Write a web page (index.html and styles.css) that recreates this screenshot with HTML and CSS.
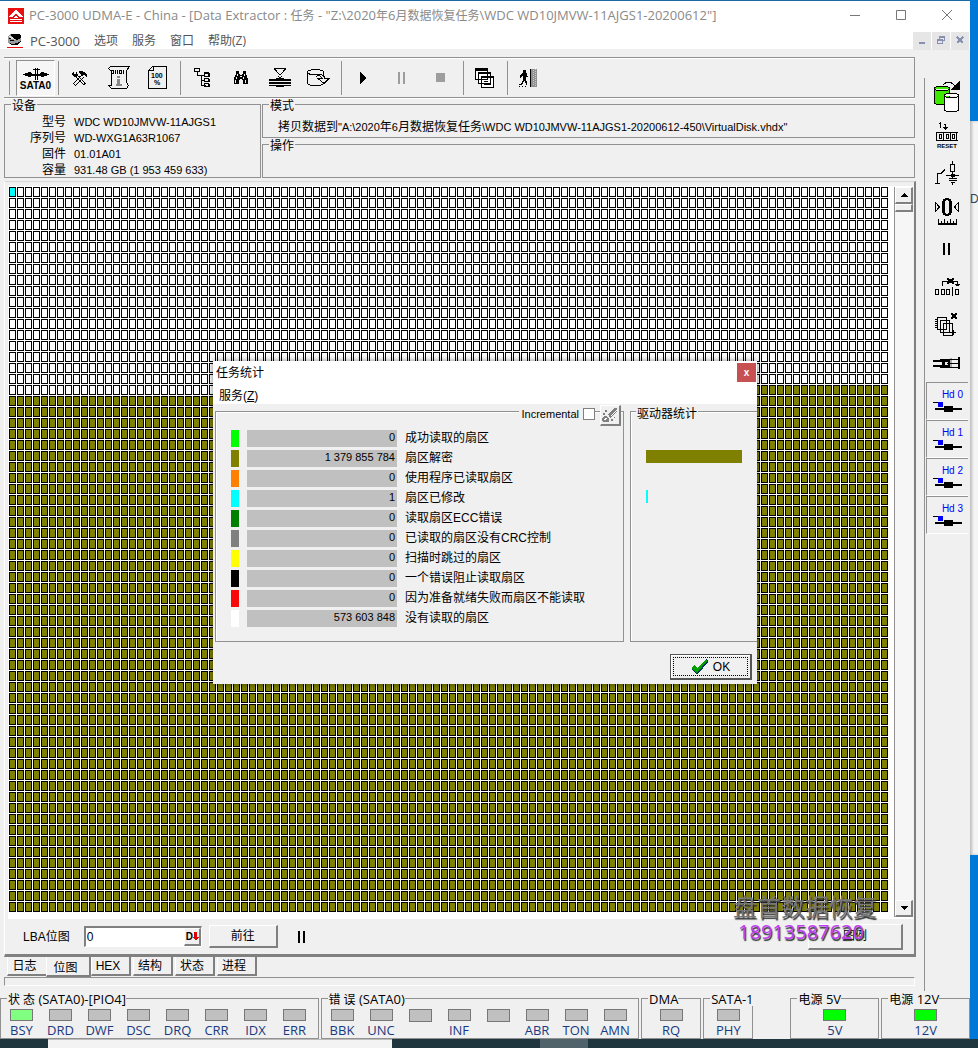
FILE: index.html
```
<!DOCTYPE html>
<html lang="zh-CN">
<head>
    <meta charset="UTF-8">
    <meta name="viewport" content="width=device-width, initial-scale=1.0">
    <title>PC-3000 UDMA-E</title>
    <link rel="stylesheet" href="styles.css">
</head>
<body>
    <div class="desktop">
        <div class="app">
            <header class="titlebar">
                <svg class="logo" viewBox="0 0 16 16"><path fill="#e81010" d="M0 0h16v16H0z"/><path fill="#fff" d="M7 2h2v1h1v1h1v1h1v1h1v1h1v1h1v1h-4V8h-1V7H9V6H7v1H6v1H5v1H1V8h1V7h1V6h1V5h1V4h1V3h1zM7 8h2v1h1v1H6V9h1zM2 11h12v1H2zM2 13h12v1H2z"/></svg>
                <h1>PC-3000 UDMA-E - China - [Data Extractor : <b>任务</b> - "Z:\2020<b>年</b>6<b>月数据恢复任务</b>\WDC WD10JMVW-11AJGS1-20200612"]</h1>
                <div class="window-buttons">
                    <button aria-label="Minimize"><svg viewBox="0 0 11 11"><path d="M0 5.500h10"/></svg></button>
                    <button aria-label="Maximize"><svg viewBox="0 0 11 11"><path d="M.5.500h9v9h-9z"/></svg></button>
                    <button aria-label="Close"><svg viewBox="0 0 11 11"><path d="M0 0l10 10M10 0L0 10"/></svg></button>
                </div>
            </header>
            <nav class="menubar">
                <svg class="menu-logo" viewBox="0 0 16 16"><path fill="#999" d="M1 3l3-2h8l2 5v3l-8 3-5-2z"/><path fill="#000" d="M4 1h8l2 1v3l-2 1-2 1-3-1-3-3zM2 10l3 1 5-1 4-2v1l-4 3H5z"/><path fill="#000" d="M2 5h3v1H2zM3 7h4v1H3z"/><path fill="#e4e4e4" d="M2 3l4 1 2 3-3-1-3-2z"/><path fill="#e81010" d="M0 14h16v1H0z"/></svg>
                <a href="#">PC-3000</a>
                <a href="#"><b>选项</b></a>
                <a href="#"><b>服务</b></a>
                <a href="#"><b>窗口</b></a>
                <a href="#"><b>帮助(Z)</b></a>
                <div class="mdi-buttons">
                    <button aria-label="Minimize child"><svg viewBox="0 0 9 9"><path d="M1 7h6"/></svg></button>
                    <button aria-label="Restore child"><svg viewBox="0 0 9 9"><path class="thin" d="M.5 3.500h5v4h-5zM.5 4.500h5M2.500 3V.5h5v4h-2M2.500 1.500h5"/></svg></button>
                    <button aria-label="Close child"><svg viewBox="0 0 9 9"><path d="M1 1l6 6M7 1L1 7"/></svg></button>
                </div>
            </nav>

            <div class="main">
                <div class="workspace">
                    <div class="toolbar">
                        <i class="sep"></i>
                        <button class="port" aria-label="SATA0">
                            <svg width="26" height="12" viewBox="0 0 26 12"><path d="M0 6h26v1H0zM2 5h7v3H2zM5 4h3v5H5zM17 5h7v3h-7zM18 4h3v5h-3zM9 6h8v2H9z"/><path d="M12 0h1v12h-1zM14 0h1v12h-1zM10 1h7v1h-7z"/></svg>
                            <span>SATA0</span>
                        </button>
                        <i class="sep"></i>
                        <button aria-label="Tools"><svg width="16" height="16" viewBox="0 0 16 16"><path d="M7 1h4v1h2v1h1v1h1v3h-1V6h-1V5h-2v1H9V4H8V3H7zM1 2h1v2h2V2h1v2h1v2H5v1H2V6H1V5H0V3h1z"/><path class="line" d="M9.500 5.500l-8 8M11.500 7.500l-8 8M1 13.500l3 2M6.500 6l7 8M4.500 7.500l7 7M11 14.500l3-1"/></svg></button>
                        <button aria-label="Script"><svg width="22" height="24" viewBox="0 0 22 24"><path class="line" d="M2.500 4.500l-2-2 2-2h19l-3 4v12l2 3-2 3h-15l-3-3h3v-14z"/><path class="line" d="M3.500 4.500h2v3h-2zM7.500 4v4M9.500 4v4M11.500 4.500h2v3h-2zM15.500 4v4"/><path fill="#888" d="M9 13h3v5h2v2H8v-2h1zM9 10h3v2H9z"/></svg></button>
                        <button aria-label="Percent"><svg width="19" height="23" viewBox="0 0 19 23"><path class="line" d="M.5 4.500l4-4h14v22H.5zM1 4h4V0"/><text class="tiny" x="3" y="12">100</text><text class="tiny" x="6" y="19">%</text></svg></button>
                        <i class="sep"></i>
                        <button aria-label="Tree"><svg width="16" height="20" viewBox="0 0 16 20"><path class="line" d="M.5.500h5v3h-5zM3.500 4v3h7M7.500 7v10h4M8 12.500h3M10.500 4.500h4v4h-4zM10.500 10.500h4v3h-4zM10.500 15.500h4v3h-4zM10 5.500h5M15.500 5v4M15.500 11v3M15.500 16v3"/></svg></button>
                        <button aria-label="Find"><svg width="16" height="14" viewBox="0 0 16 14"><path d="M3 0h3v3h1v1h2V3h1V0h3v3l1 2 1 3v5h-5V9H9V8H7v1H6v4H1V8l1-3 1-2z"/><path fill="#f0f0f0" d="M4 3h1v2H4zM3 6h1v2H3zM2 9h1v3H2zM11 3h1v2h-1zM10 6h1v2h-1zM12 9h1v3h-1zM7 5h2v1H7z"/></svg></button>
                        <button aria-label="Head map"><svg width="22" height="20" viewBox="0 0 22 20"><path class="line" d="M5 .5h12M5.500 1l5.500 6 5.500-6M9 8l2 2 2-2"/><path d="M0 11h22v2H0zM0 14h22v2H0zM0 17h22v1H0zM7 10h8v9H7z"/><path fill="#f0f0f0" d="M0 13h22v1H0zM0 16h22v1H0z"/></svg></button>
                        <button aria-label="Copy disk"><svg width="23" height="18" viewBox="0 0 23 18"><path class="line" d="M.5 3c0-3 16-3 16 0M.5 3c0 3 8 3 11 2M.5 3v11c0 3 12 4 15 1M16.500 3v4M9 7.500c2-2 5-1 6 2h-4l6 5 5-5h-4c-1-3-3-4-6-4"/></svg></button>
                        <i class="sep"></i>
                        <button aria-label="Start"><svg width="7" height="12" viewBox="0 0 7 12"><path d="M1 0l6 6-6 6z"/></svg></button>
                        <button aria-label="Pause" disabled><svg width="8" height="12" viewBox="0 0 8 12"><path fill="#9d9d9d" d="M0 0h2v12H0zM5 0h2v12H5z"/></svg></button>
                        <button aria-label="Stop" disabled><svg width="10" height="10" viewBox="0 0 10 10"><path fill="#9d9d9d" d="M0 0h9v9H0z"/></svg></button>
                        <i class="sep"></i>
                        <button aria-label="Windows"><svg width="20" height="20" viewBox="0 0 20 20"><path fill="#fff" stroke="#000" d="M.5.500h12v11H.5zM3.500 4.500h12v11h-12zM6.500 8.500h12v11h-12z"/><path d="M1 1h12v2H1zM4 5h12v1H4zM7 9h12v1H7zM9 13h4v1H9zM9 16h7v1H9z"/></svg></button>
                        <i class="sep"></i>
                        <button aria-label="Exit"><svg width="19" height="18" viewBox="0 0 19 18"><path d="M4 1h3v3h1v3h1v1H7v3l1 2v3H7l-1-4H5l-2 4H0v-1h2l2-4V8L3 7 2 9H1V6l2-2h1zM0 17h1v1H0zM3 17h1v1H3zM6 17h1v1H6z"/><path fill="#909090" d="M11 0h7v18h-7z"/><path d="M11 0h1v18h-1z"/><path fill="none" stroke="#ccc" stroke-dasharray="1 1" d="M14.500 1v16M16.500 0v17"/></svg></button>
                    </div>

                    <div class="info">
                        <fieldset class="device">
                            <legend>设备</legend>
                            <dl>
                                <dt>型号</dt><dd>WDC WD10JMVW-11AJGS1</dd>
                                <dt>序列号</dt><dd>WD-WXG1A63R1067</dd>
                                <dt>固件</dt><dd>01.01A01</dd>
                                <dt>容量</dt><dd>931.48 GB (1 953 459 633)</dd>
                            </dl>
                        </fieldset>
                        <div class="modes">
                            <fieldset>
                                <legend>模式</legend>
                                <p><b>拷贝数据到</b>"A:\2020<b>年</b>6<b>月数据恢复任务</b>\WDC WD10JMVW-11AJGS1-20200612-450\VirtualDisk.vhdx"</p>
                            </fieldset>
                            <fieldset>
                                <legend>操作</legend>
                            </fieldset>
                        </div>
                    </div>

                    <section class="panel">
                        <div class="map-area">
                            <svg class="map">
                                <defs>
                                    <pattern id="unread" width="8" height="11" patternUnits="userSpaceOnUse"><path d="M0 0h7v10H0z"/><path fill="#fff" d="M1 1h5v8H1z"/></pattern>
                                    <pattern id="decoded" width="8" height="11" patternUnits="userSpaceOnUse"><path d="M0 0h7v10H0z"/><path fill="#808000" d="M1 1h5v8H1z"/></pattern>
                                </defs>
                                <rect width="880" height="209" fill="url(#unread)"/>
                                <rect x="480" y="198" width="400" height="11" fill="url(#decoded)"/>
                                <rect y="209" width="880" height="517" fill="url(#decoded)"/>
                                <rect x="1" y="1" width="5" height="8" fill="#00ffff"/>
                            </svg>
                            <div class="scrollbar">
                                <button aria-label="Scroll up"><svg width="8" height="4" viewBox="0 0 8 4"><path d="M0 4l4-4 4 4z"/></svg></button>
                                <span class="thumb"></span>
                                <button class="down" aria-label="Scroll down"><svg width="8" height="4" viewBox="0 0 8 4"><path d="M0 0l4 4 4-4z"/></svg></button>
                            </div>
                        </div>
                        <div class="lba-bar">
                            <label for="lba">LBA位图</label>
                            <div class="lba-field">
                                <input id="lba" type="text" value="0">
                                <button aria-label="Decimal">D<svg width="6" height="9" viewBox="0 0 6 9"><path fill="#e00000" d="M1 0h3v5h2L3 9 0 5h1z"/></svg></button>
                            </div>
                            <button class="btn go">前往</button>
                            <svg width="8" height="12" viewBox="0 0 8 12"><path d="M0 0h2v12H0zM5 0h2v12H5z"/></svg>
                            <button class="btn legend-btn">图例</button>
                        </div>
                        <div class="watermark"><span>盘首数据恢复</span><em>18913587620</em></div>
                    </section>

                    <div class="tabs">
                        <button>日志</button>
                        <button class="active">位图</button>
                        <button>HEX</button>
                        <button>结构</button>
                        <button>状态</button>
                        <button>进程</button>
                    </div>
                    <div class="progress-line"></div>
                </div>

                <aside class="sidebar">
                    <button aria-label="Copy data"><svg width="26" height="32" viewBox="0 0 26 32"><path class="line" d="M9 4l3-2.500h5l5 4M18 8h7V1z"/><path d="M18 8h7V1z"/><path fill="#3fe800" stroke="#000" d="M.5 7.500c0-3 15-3 15 0v14c0 3-15 3-15 0zM.5 7.500c0 3 15 3 15 0"/><path fill="#fff" stroke="#000" d="M10.500 14.500c0-3 14-3 14 0v14c0 3-14 3-14 0zM10.500 14.500c0 3 14 3 14 0"/></svg></button>
                    <button aria-label="Reset"><svg width="22" height="28" viewBox="0 0 22 28"><path class="line" d="M3 2.500h2M4.500 1v6M8 3.500h2M9.500 3v6M7 6.500h5M8 7.500h3M.5 11.500H22M.5 19.500H22M.5 11v9M7.500 11v9M14.500 11v9M20.500 11v9M3.500 13.500h2v4h-2zM10.500 13.500h2v4h-2zM16.500 13.500h2v4h-2z"/><text class="micro" x="1" y="27">RESET</text></svg></button>
                    <button aria-label="Relay"><svg width="24" height="24" viewBox="0 0 24 24"><path class="line" d="M0 22.500h5M2.500 22V12.500H6l4-4M17.500 0v3M15.500 3.500h4v7h-4zM17.500 11v6M11 14.500h13M14 17.500h8M14 19.500h8M16 21.500h4M17.500 22v2"/><path d="M16 13h4v3h-4z"/></svg></button>
                    <button aria-label="Zero"><svg width="25" height="28" viewBox="0 0 25 28"><path class="line" d="M.5 5.500v9l4-4.500zM23.500 5.500v9l-4-4.500z"/><path fill-rule="evenodd" d="M10 1h4v1h2v2h1v12h-1v2h-2v1h-4v-1H8v-2H7V4h1V2h2zM11 3v1h-1v12h1v1h2v-1h1V4h-1V3z"/><path class="line" d="M3.500 22v4M6.500 24v2M9.500 22v4M12.500 24v2M15.500 22v4M18.500 24v2M21.500 22v4"/><path d="M3 26h19v2H3z"/></svg></button>
                    <button aria-label="Pause drive"><svg width="8" height="12" viewBox="0 0 8 12"><path d="M0 0h2v12H0zM5 0h2v12H5z"/></svg></button>
                    <button aria-label="Skip sector"><svg width="25" height="20" viewBox="0 0 25 20"><path class="line" d="M7.500 9V4.500h15V8M20 7.500h5M21 8.500h3M.5 12.500h3v5h-3zM6.500 12.500h3v5h-3zM11.500 12.500h3v5h-3zM17.500 10v9M20.500 12.500h3v5h-3z"/><path d="M12 1h2v1h3V1h2v2h-1v2h1v2h-2V6h-3v1h-2V5h1V3h-1z"/></svg></button>
                    <button aria-label="Clear pages"><svg width="24" height="24" viewBox="0 0 24 24"><path fill="#f0f0f0" stroke="#000" d="M2.500 4.500h9v12h-9zM5.500 7.500h9v12h-9zM8.500 10.500h9v12h-9z"/><path class="line" d="M0 6.500h3M0 8.500h3M0 10.500h3M0 12.500h3M0 14.500h3M15 19.500h6M18.500 17v5"/><path d="M16 0h2v1h2V0h2v2h-1v2h1v2h-2V5h-2v1h-2V4h1V2h-1z"/></svg></button>
                    <button aria-label="Connector"><svg width="28" height="14" viewBox="0 0 28 14"><path d="M0 4h14v2H0zM0 9h14v2H0zM7 3h10v9H7z"/><path fill="#f0f0f0" d="M4 6h5v3H4zM12 6h3v3h-3z"/><path fill="#aaa" d="M17 2h2v10h-2z"/><path class="line" d="M17 3.500h8M14 7.500h11M17 11.500h8"/><path d="M25 1h2v12h-2z"/></svg></button>
                    <button class="hd"><span>Hd 0</span><svg width="30" height="11" viewBox="0 0 30 11"><path fill="#0000ff" d="M5 0h5v5H5z"/><path d="M0 0h5v1H0zM2 6h27v2H2zM11 4h9v6h-9z"/></svg></button>
                    <button class="hd"><span>Hd 1</span><svg width="30" height="11" viewBox="0 0 30 11"><path fill="#0000ff" d="M5 0h5v5H5z"/><path d="M0 0h5v1H0zM2 6h27v2H2zM11 4h9v6h-9z"/></svg></button>
                    <button class="hd"><span>Hd 2</span><svg width="30" height="11" viewBox="0 0 30 11"><path fill="#0000ff" d="M5 0h5v5H5z"/><path d="M0 0h5v1H0zM2 6h27v2H2zM11 4h9v6h-9z"/></svg></button>
                    <button class="hd"><span>Hd 3</span><svg width="30" height="11" viewBox="0 0 30 11"><path fill="#0000ff" d="M5 0h5v5H5z"/><path d="M0 0h5v1H0zM2 6h27v2H2zM11 4h9v6h-9z"/></svg></button>
                </aside>
            </div>

            <footer class="leds">
                <fieldset class="eight">
                    <legend><b>状 态</b> (SATA0)-[PIO4]</legend>
                    <span class="led busy">BSY</span><span class="led">DRD</span><span class="led">DWF</span><span class="led">DSC</span><span class="led">DRQ</span><span class="led">CRR</span><span class="led">IDX</span><span class="led">ERR</span>
                </fieldset>
                <fieldset class="eight">
                    <legend><b>错 误</b> (SATA0)</legend>
                    <span class="led">BBK</span><span class="led">UNC</span><span class="led"></span><span class="led">INF</span><span class="led"></span><span class="led">ABR</span><span class="led">TON</span><span class="led">AMN</span>
                </fieldset>
                <fieldset class="dma">
                    <legend>DMA</legend>
                    <span class="led">RQ</span>
                </fieldset>
                <fieldset class="sata">
                    <legend>SATA-1</legend>
                    <span class="led">PHY</span>
                </fieldset>
                <fieldset class="power first">
                    <legend><b>电源</b> 5V</legend>
                    <span class="led on">5V</span>
                </fieldset>
                <fieldset class="power">
                    <legend><b>电源</b> 12V</legend>
                    <span class="led on">12V</span>
                </fieldset>
            </footer>
        </div>

        <div class="behind"><div class="behind-window">D</div></div>

        <div class="taskbar"><span class="search"></span><span class="task"></span></div>

        <div class="dialog" role="dialog" aria-labelledby="dialog-title">
            <div class="dialog-title">
                <h2 id="dialog-title">任务统计</h2>
                <button class="dialog-close" aria-label="Close">x</button>
            </div>
            <div class="dialog-menu"><a href="#">服务(<u>Z</u>)</a></div>
            <div class="dialog-body">
                <div class="group stats">
                    <div class="incremental">
                        <label for="incremental">Incremental</label>
                        <input type="checkbox" id="incremental">
                        <button aria-label="Clear"><svg width="17" height="16" viewBox="0 0 17 16"><path fill="#808080" d="M16 1h-2L7 7l2 4 7-6zM1 11l2-2h2l3 3v3H2l-1-2zM4 3h2v2H4zM2 6h2v2H2zM10 12h2v2h-2zM13 10h1v1h-1z"/><path stroke="#fff" d="M10 9l6-6M3 13l3-2"/></svg></button>
                    </div>
                    <table>
                        <tr><td class="swatch good"></td><td class="count">0</td><td class="name">成功读取的扇区</td></tr>
                        <tr><td class="swatch decoded"></td><td class="count">1 379 855 784</td><td class="name">扇区解密</td></tr>
                        <tr><td class="swatch program"></td><td class="count">0</td><td class="name">使用程序已读取扇区</td></tr>
                        <tr><td class="swatch changed"></td><td class="count">1</td><td class="name">扇区已修改</td></tr>
                        <tr><td class="swatch ecc"></td><td class="count">0</td><td class="name">读取扇区ECC错误</td></tr>
                        <tr><td class="swatch crc"></td><td class="count">0</td><td class="name">已读取的扇区没有CRC控制</td></tr>
                        <tr><td class="swatch skipped"></td><td class="count">0</td><td class="name">扫描时跳过的扇区</td></tr>
                        <tr><td class="swatch blocked"></td><td class="count">0</td><td class="name">一个错误阻止读取扇区</td></tr>
                        <tr><td class="swatch failed"></td><td class="count">0</td><td class="name">因为准备就绪失败而扇区不能读取</td></tr>
                        <tr><td class="swatch unread"></td><td class="count">573 603 848</td><td class="name">没有读取的扇区</td></tr>
                    </table>
                </div>
                <div class="group drive">
                    <h3>驱动器统计</h3>
                    <div class="bar decoded"></div>
                    <div class="bar changed"></div>
                </div>
            </div>
            <div class="dialog-actions">
                <button class="ok"><span><svg width="17" height="16" viewBox="0 0 17 16"><path fill="#003060" d="M0 10l3-3 3 3L15 0l2 1v2L7 15H5z"/><path fill="#00a000" d="M0 9l3-3 3 3L15 0l1 2L6 14z"/></svg>OK</span></button>
            </div>
        </div>
    </div>
</body>
</html>
```
FILE: styles.css
```
* {
    box-sizing: border-box;
}

body {
    margin: 0;
    background-color: #f0f0f0;
    font-family: "Liberation Sans", "Noto Sans CJK SC", sans-serif;
    font-size: 12px;
    line-height: 16px;
    color: #000;
}

button, input {
    font: inherit;
    color: inherit;
    margin: 0;
    padding: 0;
    border: none;
    background: none;
    border-radius: 0;
}

a {
    color: inherit;
    text-decoration: none;
}

h1, h2, h3, p, dl, dd {
    margin: 0;
    font-size: inherit;
    font-weight: normal;
}

b {
    font-weight: normal;
    font-size: 12px;
}

svg {
    display: block;
    flex: none;
    shape-rendering: crispEdges;
}

.line {
    fill: none;
    stroke: #000;
}

.tiny {
    font-size: 7px;
    font-weight: bold;
}

.micro {
    font-size: 6px;
    font-weight: bold;
}

.desktop {
    position: relative;
    display: grid;
    grid-template-columns: 1fr 8px;
    grid-template-rows: 1fr 9px;
    height: 100vh;
    overflow: hidden;
}

.app {
    display: flex;
    flex-direction: column;
    min-width: 0;
    min-height: 0;
    border-top: 1px solid #1a6ba5;
    background-color: #f0f0f0;
}

/* title and menu */
.titlebar, .menubar, .leds {
    font-family: "Open Sans", "Noto Sans CJK SC", sans-serif;
    font-size: 13px;
}

.titlebar {
    display: flex;
    align-items: center;
    height: 29px;
    padding-left: 8px;
    background-color: #fff;
    color: #8a8a8a;
}

.logo {
    width: 16px;
    height: 16px;
    margin-right: 5px;
}

.titlebar h1 {
    flex: 1;
    white-space: nowrap;
    overflow: hidden;
}

.window-buttons {
    display: flex;
}

.window-buttons button {
    display: flex;
    justify-content: center;
    align-items: center;
    width: 46px;
    height: 29px;
}

.window-buttons svg {
    width: 11px;
    height: 11px;
    fill: none;
    stroke: #777;
    shape-rendering: auto;
}

.menubar {
    display: flex;
    align-items: center;
    gap: 14px;
    height: 19px;
    padding: 2px 0 0 7px;
    background-color: #fff;
    color: #555;
}

.menu-logo {
    width: 16px;
    height: 16px;
    margin-right: -7px;
}

.mdi-buttons {
    display: flex;
    gap: 1px;
    margin-left: auto;
    padding-right: 1px;
}

.mdi-buttons button {
    display: flex;
    justify-content: center;
    align-items: center;
    width: 18px;
    height: 18px;
    background-color: #e6e6e6;
}

.mdi-buttons svg {
    width: 9px;
    height: 9px;
    fill: none;
    stroke: #8790b0;
    stroke-width: 2;
}

.mdi-buttons .thin {
    stroke-width: 1;
}

.main {
    display: flex;
    flex: 1;
    min-height: 0;
}

.workspace {
    display: flex;
    flex-direction: column;
    flex: 1;
    min-width: 0;
    padding: 8px 9px 0 4px;
}

/* toolbar */
.toolbar {
    display: flex;
    align-items: center;
    height: 41px;
    padding-left: 5px;
    border: 1px solid #919191;
    border-left: none;
    box-shadow: inset 0 1px #fff, 0 1px #fff;
}

.toolbar button {
    display: flex;
    flex-direction: column;
    justify-content: center;
    align-items: center;
    width: 39px;
    height: 36px;
}

.sep {
    width: 1px;
    height: 34px;
    margin: 0 1px 0 3px;
    background-color: #919191;
}

.sep:first-child {
    margin: 0 6px 0 0;
}

.toolbar .port {
    border: 1px solid #919191;
    border-right-color: #fff;
    border-bottom-color: #fff;
    font-size: 10px;
    font-weight: bold;
    line-height: 12px;
    background-color: #f6f6f6;
}

.port svg {
    margin-top: 5px;
}

/* device info */
.info {
    display: flex;
    gap: 1px;
}

fieldset {
    min-width: 0;
    margin: 0;
    padding: 0;
    border: 1px solid #919191;
}

legend {
    margin-left: 6px;
    padding: 4px 1px 0;
    line-height: 9px;
    white-space: nowrap;
}

.device {
    width: 257px;
    height: 80px;
}

.device dl {
    display: grid;
    grid-template-columns: 61px 1fr;
    column-gap: 8px;
    padding-top: 3px;
}

.device dt {
    text-align: right;
}

.device dd {
    font-size: 11px;
}

.modes {
    flex: 1;
    min-width: 0;
}

.modes fieldset {
    height: 40px;
}

.modes p {
    padding: 8px 0 0 15px;
    font-size: 11px;
    white-space: nowrap;
}

/* sector map */
.panel {
    position: relative;
    display: flex;
    flex-direction: column;
    flex: 1;
    min-height: 0;
    margin: 3px -1px 0 0;
    padding: 4px 1px 0 3px;
    border-top: 1px solid #d8d8d8;
    border-left: 1px solid #fff;
    border-right: 2px solid #808080;
    border-bottom: 3px solid #808080;
}

.map-area {
    display: flex;
    flex: 1;
    min-height: 0;
    padding: 1px 0 0 1px;
    background-color: #fff;
}

.map {
    flex: 1;
    min-width: 0;
    height: 100%;
}

.scrollbar {
    display: flex;
    flex-direction: column;
    width: 19px;
    margin-bottom: 2px;
    border-left: 1px solid #919191;
    background-color: #f6f6f6;
}

.scrollbar button {
    display: flex;
    justify-content: center;
    align-items: center;
    height: 17px;
}

.scrollbar button, .thumb, .btn, .lba-field button, .incremental button {
    background-color: #f0f0f0;
    border: 1px solid #fff;
    border-right: 2px solid #808080;
    border-bottom: 2px solid #808080;
}

.thumb {
    height: 8px;
}

.scrollbar .down {
    margin-top: auto;
}

.lba-bar {
    display: flex;
    align-items: center;
    height: 35px;
    padding: 0 10px 0 15px;
}

.lba-field {
    display: flex;
    width: 118px;
    height: 21px;
    margin: 0 7px 0 14px;
    border: 2px solid #808080;
    border-right: 1px solid #fff;
    border-bottom: 1px solid #fff;
    background-color: #fff;
}

.lba-field input {
    flex: 1;
    min-width: 0;
    padding-left: 1px;
}

.lba-field button {
    display: flex;
    align-items: center;
    width: 17px;
    padding-left: 1px;
    font-size: 10px;
    font-weight: bold;
}

.go {
    width: 69px;
    height: 23px;
    margin-right: 20px;
}

.legend-btn {
    width: 95px;
    height: 26px;
    margin-left: auto;
}

.watermark {
    position: absolute;
    right: 37px;
    bottom: 10px;
    color: #777;
    font-family: "Noto Sans", "Noto Sans CJK SC", sans-serif;
    font-size: 24px;
    line-height: 25px;
    text-shadow: 1px 2px 1px #333;
}

.watermark span, .watermark em {
    display: block;
}

.watermark em {
    padding-left: 5px;
    color: #c040f0;
    font-style: normal;
    font-size: 20px;
}

/* tabs */
.tabs {
    display: flex;
    align-items: flex-start;
    gap: 2px;
    height: 20px;
    padding-left: 3px;
}

.tabs button {
    width: 40px;
    height: 19px;
    padding: 1px 5px 0 0;
    border-left: 1px solid #fff;
    border-right: 2px solid #808080;
    border-bottom: 2px solid #808080;
}

.tabs button:first-child {
    width: 39px;
    border-right: none;
}

.tabs .active {
    width: 45px;
    height: 20px;
    margin: 0 -2px;
    padding-top: 3px;
}

.progress-line {
    height: 9px;
    border: 1px solid #919191;
    border-right-color: #fff;
    border-bottom-color: #fff;
}

/* right toolbar */
.sidebar {
    width: 46px;
    margin: 29px 0 -5px;
    padding: 0 2px 0 1px;
    border-left: 1px solid #919191;
}

.sidebar button {
    display: flex;
    flex-direction: column;
    justify-content: center;
    align-items: center;
    width: 100%;
    height: 38px;
}

.sidebar .hd {
    padding-bottom: 3px;
    border-top: 1px solid #919191;
    border-left: 1px solid #919191;
    border-bottom: 1px solid #fff;
    color: #0000ff;
    font-size: 10px;
    line-height: 15px;
}

.hd span {
    align-self: flex-end;
    padding-right: 5px;
}

/* state leds */
.leds {
    display: flex;
    gap: 2px;
    padding-top: 4px;
}

.leds fieldset {
    display: flex;
    height: 49px;
}

.leds legend {
    padding: 3px 0 0 1px;
    line-height: 13px;
}

.leds .eight {
    flex: 320;
    padding-left: 1px;
}

.leds .eight legend {
    margin-left: 5px;
}

.leds .dma {
    flex: 59;
    justify-content: center;
}

.leds .sata {
    flex: 49;
    justify-content: center;
}

.leds .power {
    flex: 88;
    justify-content: center;
}

.leds .first {
    margin-left: 35px;
}

.led {
    display: flex;
    flex-direction: column;
    align-items: center;
    width: 39px;
    padding-top: 3px;
    color: #1a3a80;
}

.led::before {
    content: "";
    width: 21px;
    height: 11px;
    margin-bottom: 1px;
    border: 1px solid #777;
    background-color: #c0c0c0;
}

.busy::before {
    background-color: #80ff80;
}

.on::before {
    background-color: #00ff00;
}

/* what shows around the window */
.behind {
    padding: 121px 0 184px;
    background-color: #0078d7;
}

.behind-window {
    height: 100%;
    padding-top: 70px;
    background-color: #f5f5f5;
    color: #345;
    overflow: hidden;
    box-shadow: inset 2px 0 3px #bbb;
}

.taskbar {
    grid-column: 1 / -1;
    display: flex;
    padding-left: 48px;
    background-color: #20363f;
}

.search {
    width: 344px;
    background-color: #f3f3f3;
    border-top: 1px solid #bbb;
}

.task {
    width: 48px;
    margin-left: 148px;
    background-color: #50626a;
}

/* statistics dialog */
.dialog {
    position: absolute;
    left: 213px;
    top: 361px;
    width: 544px;
    background-color: #f0f0f0;
    box-shadow: 0 0 6px rgba(0, 0, 0, 0.5);
    overflow: hidden;
}

.dialog-title {
    display: flex;
    height: 24px;
    padding: 2px 1px 0 3px;
    background-color: #fff;
}

.dialog-title h2 {
    flex: 1;
    line-height: 20px;
}

.dialog-close {
    width: 19px;
    height: 19px;
    background-color: #c75050;
    color: #fff;
    font-size: 10px;
    font-weight: bold;
}

.dialog-menu {
    height: 19px;
    padding: 3px 6px 0;
    background-color: #fff;
}

.dialog-body {
    display: flex;
    gap: 6px;
    padding: 7px 0 0 2px;
}

.group {
    position: relative;
    height: 231px;
    border: 1px solid #919191;
    box-shadow: inset 1px 1px #fff;
}

.stats {
    width: 409px;
    padding: 15px 0 0 7px;
}

.incremental {
    position: absolute;
    right: 2px;
    top: -7px;
    display: flex;
    align-items: center;
    font-size: 11px;
}

.incremental label {
    padding: 0 4px 3px 3px;
    background-color: #f0f0f0;
}

.incremental input {
    appearance: none;
    width: 12px;
    height: 12px;
    margin: 0 5px 3px 0;
    border: 1px solid #808080;
    background-color: #fff;
}

.incremental button {
    width: 21px;
    height: 21px;
}

table {
    border-spacing: 8px 3px;
}

td {
    height: 17px;
    padding: 0;
    line-height: 15px;
}

.swatch {
    width: 8px;
}

.count {
    width: 150px;
    padding-right: 2px;
    background-color: #c0c0c0;
    font-size: 11px;
    text-align: right;
    vertical-align: top;
}

.name {
    line-height: 17px;
    vertical-align: top;
    white-space: nowrap;
}

.good { background-color: #00ff00; }
.decoded { background-color: #808000; }
.program { background-color: #ff8000; }
.changed { background-color: #00ffff; }
.ecc { background-color: #008000; }
.crc { background-color: #808080; }
.skipped { background-color: #ffff00; }
.blocked { background-color: #000; }
.failed { background-color: #f80808; }
.unread { background-color: #fff; }

.drive {
    flex: 1;
    padding: 38px 15px 0;
    border-right: none;
}

.drive h3 {
    position: absolute;
    left: 5px;
    top: -6px;
    padding: 0 1px;
    background-color: #f0f0f0;
}

.bar {
    height: 13px;
    margin-bottom: 27px;
}

.bar.changed {
    width: 2px;
}

.dialog-actions {
    display: flex;
    justify-content: flex-end;
    padding: 12px 5px 4px 0;
}

.ok {
    width: 82px;
    height: 26px;
    padding: 2px;
    border: 1px solid #555;
    border-right-width: 2px;
    border-bottom-width: 2px;
    box-shadow: inset 1px 1px #fff;
}

.ok span {
    display: flex;
    justify-content: center;
    align-items: center;
    gap: 5px;
    height: 100%;
    border: 1px dotted #000;
}
```
